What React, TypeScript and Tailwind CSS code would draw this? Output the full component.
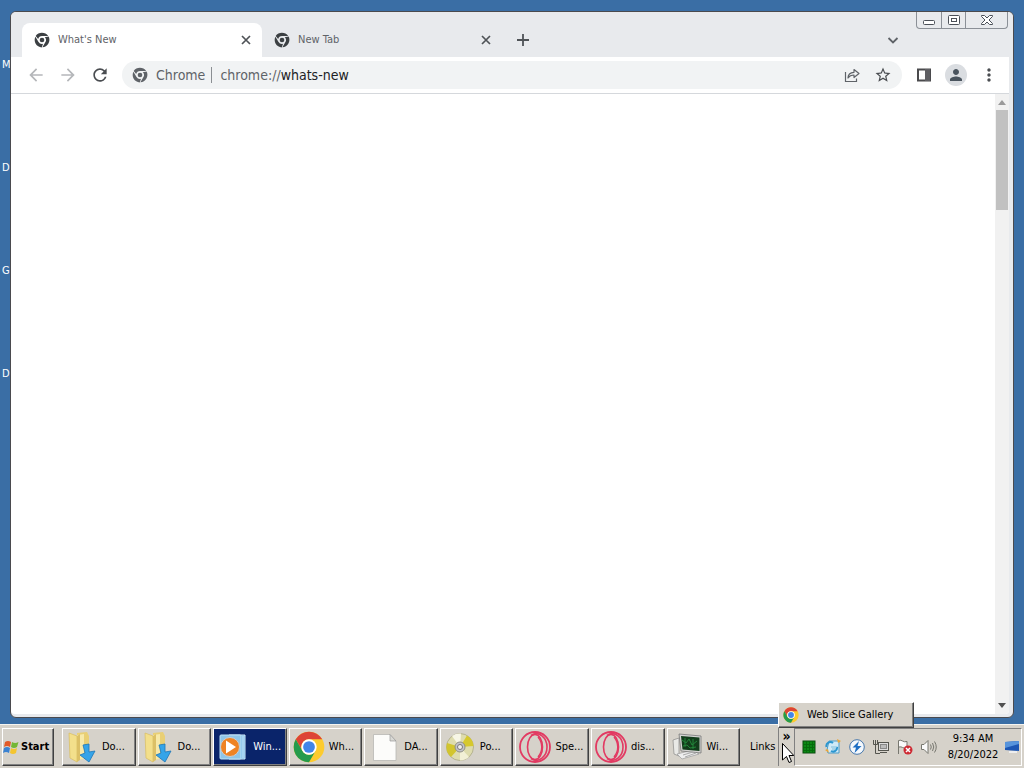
import { useState, type ReactNode } from 'react';
import clsx from 'clsx';
import { MdArrowBack, MdArrowForward, MdMoreVert, MdPerson, MdRefresh, MdStarBorder } from 'react-icons/md';

const desktopLabels = ['M', 'D', 'Go', 'D'];

const raised = 'border border-t-white border-l-white border-r-[#404040] border-b-[#404040] shadow-[inset_-1px_-1px_0_#808080]';

function ChromeLogo({ className }: { className?: string }) {
  return (
    <svg viewBox="0 0 48 48" className={className} aria-hidden="true">
      <circle cx="24" cy="24" r="23" fill="#fdcb2e" />
      <path d="M4.1 12.5A23 23 0 0 1 43.9 12.5H24A11.5 11.5 0 0 0 14 29.8Z" fill="#dd4436" />
      <path d="M4.1 12.5A23 23 0 0 0 24 47L34 29.8A11.5 11.5 0 0 1 14 29.8Z" fill="#259b4c" />
      <circle cx="24" cy="24" r="11.5" fill="#fff" />
      <circle cx="24" cy="24" r="8.8" fill="#4285e8" />
    </svg>
  );
}

function ChromeGlyph({ className }: { className?: string }) {
  return (
    <svg viewBox="0 0 48 48" className={className} aria-hidden="true">
      <g fill="currentColor">
        {[0, 120, 240].map((angle) => (
          <path key={angle} d="M5 12A22.500 22.500 0 0 1 42.500 12H24A12 12 0 0 0 12.500 21Z" transform={`rotate(${angle} 24 24)`} />
        ))}
        <circle cx="24" cy="24" r="7" />
      </g>
    </svg>
  );
}

function FolderIcon() {
  return (
    <svg viewBox="0 0 32 32" className="size-8 shrink-0" aria-hidden="true">
      <path d="M11 2L21 1L23 5V27L11 29Z" fill="#e9cf74" />
      <path d="M11 4L18 3V28L11 29Z" fill="#f7e9a9" />
      <path d="M3 2L11 5V31L4 27Z" fill="#f3df8b" stroke="#d8bd60" strokeWidth=".7" />
      <path d="M11 5L14 3V29L11 31Z" fill="#dcc066" />
      <path d="M17 14L23 13V21L29 20L23 31L14 24L19 22Z" fill="#35a4e8" stroke="#1d76b8" strokeWidth=".8" />
    </svg>
  );
}

function MediaPlayerIcon() {
  return (
    <svg viewBox="0 0 32 32" className="size-8 shrink-0" aria-hidden="true">
      <path d="M12 4H28V28H12Z" fill="#6db3e4" stroke="#d4edfc" />
      <path d="M26 5V27" stroke="#e2f4ff" strokeWidth="1" />
      <rect x="3" y="4" width="21" height="24" rx="1" fill="#8ec5e8" stroke="#bfe2f7" />
      <circle cx="13" cy="16" r="9.500" fill="#ee8324" stroke="#c9cfd4" strokeWidth="1" />
      <path d="M9 9.500L19 16L9 22.500Z" fill="#fff" />
    </svg>
  );
}

function PageIcon() {
  return (
    <svg viewBox="0 0 32 32" className="size-8 shrink-0" aria-hidden="true">
      <path d="M5.500 3.500H22L28 10V29.500H5.500Z" fill="#fcfcfa" stroke="#b8b8b4" strokeWidth=".8" />
      <path d="M22 3.500V10H28Z" fill="#d9d9d5" stroke="#999" strokeWidth=".7" />
    </svg>
  );
}

function DiscIcon() {
  return (
    <svg viewBox="0 0 32 32" className="size-8 shrink-0" aria-hidden="true">
      <circle cx="16" cy="16" r="13.500" fill="#dedcae" stroke="#a9a787" strokeWidth=".8" />
      <path d="M16 16L3 12A13.500 13.500 0 0 0 7 26Z" fill="#d2c52e" />
      <path d="M16 16L23 4.500A13.500 13.500 0 0 1 29.500 15Z" fill="#d6c82e" />
      <path d="M16 16L8 5A13.500 13.500 0 0 1 17 2.600Z" fill="#f7f6e6" />
      <path d="M16 16L25 26A13.500 13.500 0 0 1 16 29.400Z" fill="#f2f0d6" />
      <circle cx="16" cy="16" r="5" fill="#c3c3c9" stroke="#8f8f86" />
      <circle cx="16" cy="16" r="2.500" fill="#f1efea" stroke="#77777c" />
    </svg>
  );
}

function OperaIcon() {
  return (
    <svg viewBox="0 0 32 32" className="size-8 shrink-0" fill="none" stroke="#e23a62" aria-hidden="true">
      <circle cx="16" cy="16" r="15" strokeWidth="1.800" />
      <ellipse cx="16" cy="16" rx="7.500" ry="12.500" strokeWidth="1.600" />
      <path d="M12 4.500C20 -1 28 7 28 16S20 33 12 27.500" strokeWidth="1.600" />
      <path d="M19 6C24 12 24 20 19 26" strokeWidth="1.400" />
    </svg>
  );
}

function MonitorIcon() {
  return (
    <svg viewBox="0 0 32 32" className="size-8 shrink-0" aria-hidden="true">
      <path d="M2 9L8 7V25L3 23Z" fill="#e9e9e6" stroke="#8a8a88" strokeWidth=".7" />
      <path d="M6 23L22 19L28 23L11 28Z" fill="#eee" stroke="#999" strokeWidth=".7" />
      <path d="M8 3L30 5V22L10 20Z" fill="#d4d4d2" stroke="#777" strokeWidth=".8" />
      <path d="M10 5L28.500 6.500V20L11.500 18.500Z" fill="#123d1b" />
      <path d="M11 9L15 12L18 8L21 14L26 10M12 15L16 14L19 17L25 16M14 7V16M22 8V18" stroke="#23863a" fill="none" />
      <path d="M12 24L22 21M14 26L25 22" stroke="#aaa" />
    </svg>
  );
}

const tasks: { title: string; icon: ReactNode; active?: boolean }[] = [
  { title: 'Do...', icon: <FolderIcon /> },
  { title: 'Do...', icon: <FolderIcon /> },
  { title: 'Win...', icon: <MediaPlayerIcon />, active: true },
  { title: 'Wh...', icon: <ChromeLogo className="size-8 shrink-0" /> },
  { title: 'DA...', icon: <PageIcon /> },
  { title: 'Po...', icon: <DiscIcon /> },
  { title: 'Spe...', icon: <OperaIcon /> },
  { title: 'dis...', icon: <OperaIcon /> },
  { title: 'Wi...', icon: <MonitorIcon /> },
];

const tabs = ["What's New", 'New Tab'];

function WindowControls() {
  return (
    <div className="mr-[5px] flex h-[17px] self-start rounded-b-[4px] border border-t-0 border-[#8b9097] text-[#4b5058]">
      <button aria-label="Minimize" className="flex w-6 items-center justify-center">
        <svg viewBox="0 0 14 12" className="h-3 w-3.5" fill="#fff" stroke="currentColor"><rect x="1.500" y="6.500" width="11" height="4" rx="1" /></svg>
      </button>
      <button aria-label="Maximize" className="flex w-[25px] items-center justify-center border-x border-[#8b9097]">
        <svg viewBox="0 0 14 12" className="h-3 w-3.5" fill="#fff" stroke="currentColor"><rect x="1.500" y="1.500" width="11" height="9" rx="1" /><rect x="4.500" y="4.500" width="5" height="3" /></svg>
      </button>
      <button aria-label="Close" className="flex w-[41px] items-center justify-center">
        <svg viewBox="0 0 14 12" className="h-3 w-3.5" fill="#fff" stroke="currentColor"><path d="M1.500 1.500H4.500L7 4L9.500 1.500H12.500V2.500L9 6L12.500 9.500V10.500H9.500L7 8L4.500 10.500H1.500V9.500L5 6L1.500 2.500Z" /></svg>
      </button>
    </div>
  );
}

function TabStrip() {
  const [active, setActive] = useState(0);

  return (
    <div className="flex h-[45px] items-end bg-[#e8eaed] pl-[11px]">
      {tabs.map((title, i) => (
        <div
          key={title}
          className={clsx('flex h-[34px] w-60 items-center rounded-t-lg pl-3 pr-2', i === active && 'bg-white')}
        >
          <button onClick={() => setActive(i)} className="flex flex-1 items-center gap-2 text-left text-[11px] text-[#5f6368]">
            <ChromeGlyph className="size-4 text-[#3c4043]" />
            {title}
          </button>
          <button aria-label={`Close ${title}`} className="text-[#4f5357]">
            <svg viewBox="0 0 16 16" className="size-4" stroke="currentColor" strokeWidth="1.700"><path d="M4 4L12 12M12 4L4 12" /></svg>
          </button>
        </div>
      ))}
      <button aria-label="New tab" className="ml-3 mb-2 text-[#4f5357]">
        <svg viewBox="0 0 18 18" className="size-[18px]" stroke="currentColor" strokeWidth="1.800"><path d="M9 3V15M3 9H15" /></svg>
      </button>
      <div className="flex-1" />
      <button aria-label="Search tabs" className="mr-3.5 mb-2 text-[#5f6368]">
        <svg viewBox="0 0 18 18" className="size-[18px]" fill="none" stroke="currentColor" strokeWidth="1.800"><path d="M4.500 7L9 11.500L13.500 7" /></svg>
      </button>
      <WindowControls />
    </div>
  );
}

function Toolbar() {
  return (
    <div className="mr-1 flex h-[37px] items-center border-b border-[#d5d8dc] bg-white pl-[15px] pr-2.5 text-[#5f6368]">
      <div className="flex gap-3">
        <button aria-label="Back" className="text-[#b5b7ba]"><MdArrowBack className="size-5" /></button>
        <button aria-label="Forward" className="text-[#b5b7ba]"><MdArrowForward className="size-5" /></button>
        <button aria-label="Reload" className="text-[#4a4d51]"><MdRefresh className="size-5" /></button>
      </div>
      <div className="ml-3 flex h-7 flex-1 items-center rounded-full bg-[#f1f3f4] px-2.5 text-[14px]">
        <ChromeGlyph className="size-4 text-[#5f6368]" />
        <span className="ml-2">Chrome</span>
        <span className="ml-1.5 mr-2 h-4 w-px bg-[#8b8f93]" />
        <a href="chrome://whats-new" className="flex-1">chrome://<span className="text-[#202124]">whats-new</span></a>
        <button aria-label="Share this page">
          <svg viewBox="0 0 16 16" className="size-4" fill="none" stroke="currentColor" strokeWidth="1.200">
            <path d="M1.500 5V14.500H12.500V11.500" />
            <path d="M4 11C4 7.500 6 5.500 10 5.300V2.500L15 6.500L10 10.500V8C7.500 8 5.500 8.800 4 11Z" strokeLinejoin="round" />
          </svg>
        </button>
        <button aria-label="Bookmark this tab" className="ml-3.5"><MdStarBorder className="size-[18px] text-[#4a4d51]" /></button>
      </div>
      <button aria-label="Side panel" className="ml-3.5">
        <svg viewBox="0 0 16 16" className="size-4"><path d="M2 2.500H14V13.500H2Z" fill="#fff" stroke="#4a4a4d" strokeWidth="2" /><rect x="9" y="2" width="5" height="12" fill="#5f5f63" /></svg>
      </button>
      <button aria-label="Profile" className="ml-[13px] flex size-[22px] items-center justify-center rounded-full bg-[#dadde1] text-[#4a545e]">
        <MdPerson className="size-[18px]" />
      </button>
      <button aria-label="Menu" className="ml-3"><MdMoreVert className="size-5 text-[#4a4d51]" /></button>
    </div>
  );
}

function BrowserWindow() {
  return (
    <main className="relative flex flex-1 flex-col overflow-hidden rounded-md border border-[#4a4a4e] bg-[#e8eaed]">
      <TabStrip />
      <Toolbar />
      <div className="mb-[3px] mr-1 flex flex-1 overflow-hidden rounded-b bg-white">
        <div className="flex-1" />
        <div className="flex w-3.5 flex-col items-center bg-[#f1f1f1] py-1.5">
          <span className="border-x-[4px] border-b-[5px] border-x-transparent border-b-[#9a9a9a]" />
          <div className="mt-[5px] mb-2 flex w-3 flex-1"><span className="h-[100px] w-full bg-[#c1c1c1]" /></div>
          <span className="border-x-[4px] border-t-[5px] border-x-transparent border-t-[#505050]" />
        </div>
      </div>
    </main>
  );
}

function Tray() {
  return (
    <div className="flex items-center gap-2 border border-t-[#808080] border-l-[#808080] border-r-white border-b-white pl-1.5">
      <svg viewBox="0 0 16 16" className="size-4">
        <rect x="2" y="2" width="12" height="12" fill="#0b8a14" stroke="#0a4a0e" />
        <path d="M2 5.500H14M2 8.500H14M2 11.500H14M5.500 2V14M8.500 2V14M11.500 2V14" stroke="#056b0c" />
      </svg>
      <svg viewBox="0 0 16 16" className="size-4">
        <path d="M4 2H14V14H3L2 11Z" fill="#cfeaf8" stroke="#4a9cc9" />
        <path d="M1.500 8A4 4 0 0 1 8 4M12 8A4 4 0 0 1 6 12" fill="none" stroke="#2b96d0" strokeWidth="2" />
        <path d="M6 8H12M7 10H11" stroke="#7fbedc" />
        <path d="M12 0L16 2L13 4ZM0 11L3 10L4 14Z" fill="#e9a63b" />
      </svg>
      <svg viewBox="0 0 16 16" className="size-4">
        <circle cx="8" cy="8" r="7.300" fill="#f4f8fc" stroke="#4677ac" />
        <path d="M10 2L3.500 8.500H7L5.500 14L12.500 7H8.500Z" fill="#1e6fc4" />
      </svg>
      <svg viewBox="0 0 16 16" className="size-4" fill="#ddd" stroke="#55554f">
        <rect x="5.500" y="3.500" width="10" height="8" /><rect x="7.500" y="5.500" width="6" height="4" fill="#bbb" stroke="#888" />
        <path d="M7 13.500H14" /><path d="M.5 1V5.500H4.500V1M2.500 1V14.500H7" fill="none" />
      </svg>
      <svg viewBox="0 0 16 16" className="size-4">
        <path d="M1.500 15V1.500C5 0 6 4 10 2.500V9C6 10 5 7 2 8" fill="#fafafa" stroke="#77776f" />
        <circle cx="11" cy="11" r="4.500" fill="#ce2a33" /><path d="M9 9L13 13M13 9L9 13" stroke="#fff" strokeWidth="1.500" />
      </svg>
      <svg viewBox="0 0 16 16" className="size-4" fill="none" stroke="#77776f">
        <path d="M.5 5.500H3L7 1.500V14.500L3 10.500H.5Z" fill="#fafafa" /><path d="M9.500 5.500Q11 8 9.500 10.500M11.500 4Q14 8 11.500 12M13.500 2.500Q17 8 13.500 13.500" />
      </svg>
      <time className="w-14 text-center leading-4">9:34 AM<br />8/20/2022</time>
      <button aria-label="Show desktop" className="-ml-1">
        <svg viewBox="0 0 16 16" className="size-4"><path d="M0 3L14 2V12L0 11Z" fill="#1c56b4" /><path d="M0 3L14 2V5L0 9Z" fill="#5794dc" /><path d="M4 13H12" stroke="#eee" strokeWidth="2" /></svg>
      </button>
    </div>
  );
}

function Taskbar() {
  return (
    <footer className="flex h-11 border-t border-[#f5f4f0] bg-[#d6d2ca] pt-[3px] pb-0.5 pl-0.5 pr-0.5 text-black">
      <button className={clsx('flex w-[52px] items-center gap-0.5 text-[11px] font-bold', raised)}>
        <svg viewBox="0 0 16 16" className="size-4 shrink-0">
          <path d="M2 3Q5 1 8 3L7 8Q4 6 1 8Z" fill="#e25a28" /><path d="M9 3Q12 5 15.500 3L14 8Q11 10 8 8Z" fill="#74b735" />
          <path d="M1 9Q4 7 7 9L6 14Q3 12 0 14Z" fill="#3b82d1" /><path d="M8 9Q11 11 14 9L13 14Q10 16 7 14Z" fill="#f4c52f" />
        </svg>
        Start
      </button>
      <nav aria-label="Running programs" className="ml-2 flex flex-1 gap-0.5">
        {tasks.map(({ title, icon, active }, i) => (
          <button
            key={i}
            className={clsx('flex min-w-0 flex-1 items-center gap-1 pl-[3px] whitespace-nowrap', raised, active && 'bg-[#0a246a] text-white')}
          >
            {icon}
            {title}
          </button>
        ))}
      </nav>
      <div className="relative ml-2.5 flex">
        <span className="flex w-7 items-center">Links</span>
        <button aria-label="More links" aria-expanded="true" className="flex w-4 justify-center border-l border-[#808080] text-[14px] font-bold leading-4">»</button>
        <div role="menu" className={clsx('absolute bottom-full left-7 flex w-[136px] bg-[#d6d2ca]', raised)}>
          <button role="menuitem" className="flex h-6 items-center gap-2 pl-1 whitespace-nowrap">
            <ChromeLogo className="size-4" />
            Web Slice Gallery
          </button>
        </div>
        <svg viewBox="0 0 12 21" className="absolute top-[15px] left-8 z-10 h-[21px] w-3">
          <path d="M.5 .5V17L4.500 13.500L7 19.500L9.500 18.500L7 12.500H11.800Z" fill="#fff" stroke="#000" />
        </svg>
      </div>
      <Tray />
    </footer>
  );
}

export default function App() {
  return (
    <div className="flex h-screen flex-col overflow-hidden bg-[#3a6ea5] font-['DejaVu_Sans_Condensed','DejaVu_Sans',sans-serif] text-[11px]">
      <div className="relative flex flex-1 px-2.5 pt-[11px] pb-1.5">
        <ul className="absolute top-[57px] left-0 pl-0.5 whitespace-nowrap text-white">
          {desktopLabels.map((label, i) => (
            <li key={i} className="h-[103px] leading-4">{label}</li>
          ))}
        </ul>
        <BrowserWindow />
      </div>
      <Taskbar />
    </div>
  );
}
